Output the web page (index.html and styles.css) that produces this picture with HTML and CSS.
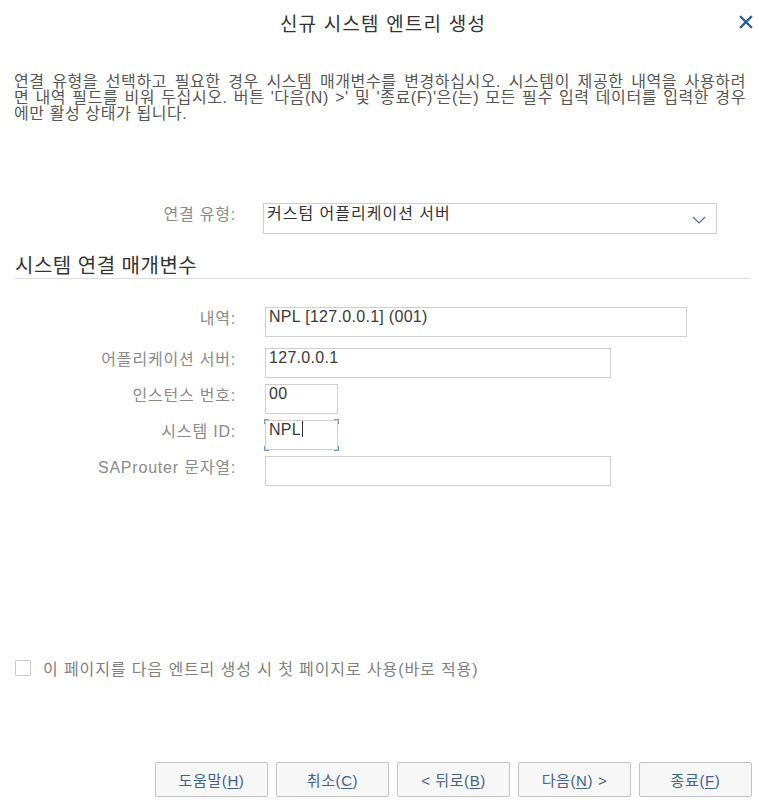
FILE: index.html
```html
<!DOCTYPE html>
<html lang="ko">
<head>
<meta charset="utf-8">
<title>신규 시스템 엔트리 생성</title>
<link rel="stylesheet" href="styles.css">
</head>
<body>
<div class="dialog">
  <header class="dlg-header">
    <h1 class="dlg-title">신규 시스템 엔트리 생성</h1>
    <button class="close-btn" aria-label="닫기">
      <svg width="14" height="14" viewBox="0 0 14 14"><path d="M2 2 L12 12 M12 2 L2 12" stroke="#2b5e9c" stroke-width="2.4" stroke-linecap="square" fill="none"/></svg>
    </button>
  </header>

  <p class="intro">연결 유형을 선택하고 필요한 경우 시스템 매개변수를 변경하십시오. 시스템이 제공한 내역을 사용하려<br>면 내역 필드를 비워 두십시오. 버튼 '다음(N) &gt;' 및 '종료(F)'은(는) 모든 필수 입력 데이터를 입력한 경우<span class="intro-last">에만 활성 상태가 됩니다.</span></p>

  <div class="type-row">
    <span class="label">연결 유형:</span>
    <div class="select">
      <span class="select-text">커스텀 어플리케이션 서버</span>
      <svg class="chev" width="14" height="8" viewBox="0 0 14 8"><path d="M1 1 L7 7 L13 1" stroke="#4a6fa8" stroke-width="1.2" fill="none"/></svg>
    </div>
  </div>

  <h2 class="section-title">시스템 연결 매개변수</h2>

  <div class="fields">
    <span class="label">내역:</span>
    <div class="input w-desc first">NPL [127.0.0.1] (001)</div>
    <span class="label">어플리케이션 서버:</span>
    <div class="input w-mid">127.0.0.1</div>
    <span class="label">인스턴스 번호:</span>
    <div class="input w-small">00</div>
    <span class="label">시스템 ID:</span>
    <div class="input w-small focused">NPL<span class="caret"></span>
      <i class="c tl"></i><i class="c tr"></i><i class="c bl"></i><i class="c br"></i>
    </div>
    <span class="label">SAProuter 문자열:</span>
    <div class="input w-mid"></div>
  </div>

  <label class="check-row">
    <span class="checkbox"></span>
    <span class="check-text">이 페이지를 다음 엔트리 생성 시 첫 페이지로 사용(바로 적용)</span>
  </label>

  <footer class="buttons">
    <button class="btn">도움말(<u>H</u>)</button>
    <button class="btn">취소(<u>C</u>)</button>
    <button class="btn">&lt; 뒤로(<u>B</u>)</button>
    <button class="btn">다음(<u>N</u>) &gt;</button>
    <button class="btn">종료(<u>F</u>)</button>
  </footer>
</div>
</body>
</html>
```
FILE: styles.css
```css
html, body {
  margin: 0;
  padding: 0;
  background: #ffffff;
}
body {
  font-family: "Liberation Sans", "Noto Sans CJK KR", sans-serif;
  color: #333333;
}
.dialog {
  width: 759px;
  height: 806px;
  box-sizing: border-box;
  padding: 0 7px 0 14px;
  position: relative;
}
.dlg-header {
  height: 44px;
  display: flex;
  align-items: center;
  justify-content: center;
  position: relative;
}
.dlg-title {
  margin: 0;
  font-size: 19px;
  font-weight: normal;
  color: #333;
  letter-spacing: 1.2px;
}
.close-btn {
  position: absolute;
  right: -2px;
  top: 14px;
  border: 0;
  background: none;
  padding: 0;
  width: 16px;
  height: 16px;
  display: flex;
  align-items: center;
  justify-content: center;
}
.intro {
  margin: 30px 0 0 0;
  font-size: 16px;
  line-height: 16px;
  color: #555555;
  letter-spacing: 0.6px;
  width: 732px;
  text-align: justify;
  text-align-last: justify;
}
.intro-last {
  display: block;
  text-align: left;
  text-align-last: left;
}
.type-row {
  margin-top: 81px;
  display: flex;
  align-items: flex-start;
}
.label {
  width: 222px;
  text-align: right;
  font-size: 16px;
  line-height: 18px;
  padding-top: 3px;
  letter-spacing: 0.8px;
  color: #8a8a8a;
  flex: none;
}
.select {
  margin-left: 27px;
  width: 454px;
  height: 31px;
  box-sizing: border-box;
  border: 1px solid #cfcfcf;
  display: flex;
  align-items: flex-start;
  justify-content: space-between;
  padding: 0 10px 0 3px;
}
.select-text {
  font-size: 16px;
  letter-spacing: 1px;
  color: #333;
  line-height: 20px;
}
.chev {
  margin-top: 12px;
}
.section-title {
  margin: 20px 0 0 1px;
  font-size: 20px;
  letter-spacing: 0.5px;
  font-weight: normal;
  color: #333;
  line-height: 24px;
  padding-bottom: 0;
  border-bottom: 1px solid #dcdcdc;
  width: 735px;
}
.fields {
  margin-top: 28px;
  display: grid;
  grid-template-columns: 222px auto;
  column-gap: 29px;
  row-gap: 6px;
  align-items: start;
}
.fields .label {
  justify-self: end;
  width: auto;
}
.input {
  height: 30px;
  box-sizing: border-box;
  border: 1px solid #cfcfcf;
  font-size: 16px;
  letter-spacing: 0.3px;
  line-height: 17px;
  padding: 0 3px;
  color: #3a3a3a;
  position: relative;
}
.input.first {
  margin-bottom: 5px;
}
.w-desc { width: 422px; }
.w-mid { width: 346px; }
.w-small { width: 73px; }
.caret {
  display: inline-block;
  width: 1px;
  height: 16px;
  background: #333;
  vertical-align: -2px;
  margin-left: 1px;
}
.c {
  position: absolute;
  width: 4px;
  height: 4px;
  border-color: #6f9bc8;
  border-style: solid;
  border-width: 0;
}
.c.tl { left: -2px; top: -2px; border-left-width: 1px; border-top-width: 1px; }
.c.tr { right: -2px; top: -2px; border-right-width: 1px; border-top-width: 1px; }
.c.bl { left: -2px; bottom: -2px; border-left-width: 1px; border-bottom-width: 1px; }
.c.br { right: -2px; bottom: -2px; border-right-width: 1px; border-bottom-width: 1px; }
.check-row {
  margin-top: 170px;
  display: flex;
  align-items: center;
  margin-left: 1px;
}
.checkbox {
  width: 16px;
  height: 16px;
  box-sizing: border-box;
  border: 1px solid #cccccc;
  border-radius: 1px;
  flex: none;
}
.check-text {
  margin-left: 12px;
  font-size: 16px;
  letter-spacing: 0.9px;
  color: #808080;
}
.buttons {
  margin-top: 82px;
  display: flex;
  justify-content: flex-end;
  gap: 8px;
}
.btn {
  width: 113px;
  height: 35px;
  box-sizing: border-box;
  border: 1px solid #c3c3c3;
  border-radius: 2px;
  background: #f7f7f7;
  font-family: "Liberation Sans", "Noto Sans CJK KR", sans-serif;
  font-size: 15px;
  letter-spacing: 0.6px;
  color: #41628a;
  padding: 0;
}
.btn u {
  text-decoration-thickness: 1px;
  text-underline-offset: 2px;
}
```
